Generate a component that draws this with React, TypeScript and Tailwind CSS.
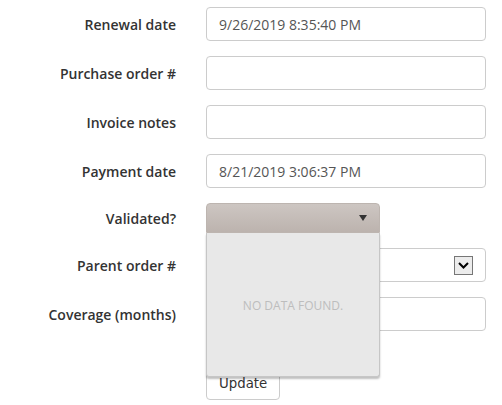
import React from 'react';

const labelCls = 'w-[176px] shrink-0 text-right text-[14px] font-semibold text-[#333]';
const inputCls = 'w-[280px] h-[34px] rounded-[4px] border border-[#ccc] bg-white px-3 text-[14px] text-[#555] flex items-center';

const Row: React.FC<{ label: string; children: React.ReactNode }> = ({ label, children }) => (
    <div className="flex items-center gap-[30px]">
        <div className={labelCls}>{label}</div>
        {children}
    </div>
);

export default function App() {
    return (
        <div
            className="w-[502px] h-[405px] bg-white overflow-hidden pt-[7px]"
            style={{ fontFamily: '"Open Sans", "Liberation Sans", sans-serif' }}
        >
            <div className="flex flex-col gap-[15px]">
                <Row label="Renewal date">
                    <div className={inputCls}>9/26/2019 8:35:40 PM</div>
                </Row>
                <Row label="Purchase order #">
                    <div className={inputCls}></div>
                </Row>
                <Row label="Invoice notes">
                    <div className={inputCls}></div>
                </Row>
                <Row label="Payment date">
                    <div className={inputCls}>8/21/2019 3:06:37 PM</div>
                </Row>
                <Row label="Validated?">
                    <div className="relative z-10 w-[174px]">
                        <div className="h-[30px] rounded-t-[4px] border border-[#bdb5b0] bg-gradient-to-b from-[#cdc6c2] to-[#bcb3ae] flex items-center justify-end pr-[12px]">
                            <svg width="8" height="6" viewBox="0 0 8 6">
                                <path d="M0 0 L8 0 L4 6 Z" fill="#333" />
                            </svg>
                        </div>
                        <div className="absolute left-0 top-full w-[174px] h-[144px] bg-[#e8e8e8] border border-t-0 border-[#c6c6c6] rounded-b-[3px] shadow-[0_2px_2px_rgba(0,0,0,0.25)] flex items-center justify-center">
                            <span className="text-[12px] text-[#bdbdbd] uppercase mt-[2px]">No data found.</span>
                        </div>
                    </div>
                </Row>
                <Row label="Parent order #">
                    <div className={`${inputCls} justify-end pr-[12px]`}>
                        <div className="w-[19px] h-[19px] border border-[#767676] bg-[#ececec] flex items-center justify-center">
                            <svg width="11" height="7" viewBox="0 0 11 7">
                                <path d="M1 1 L5.5 5.5 L10 1" fill="none" stroke="#000" strokeWidth="2" />
                            </svg>
                        </div>
                    </div>
                </Row>
                <Row label="Coverage (months)">
                    <div className={inputCls}></div>
                </Row>
                <div className="flex pl-[206px] pt-[21px]">
                    <button
                        className="h-[33px] px-[12px] rounded-[4px] border border-[#ccc] bg-white text-[13.333px] text-[#333]"
                        style={{ fontFamily: '"DejaVu Sans", sans-serif' }}
                    >
                        Update
                    </button>
                </div>
            </div>
        </div>
    );
}
